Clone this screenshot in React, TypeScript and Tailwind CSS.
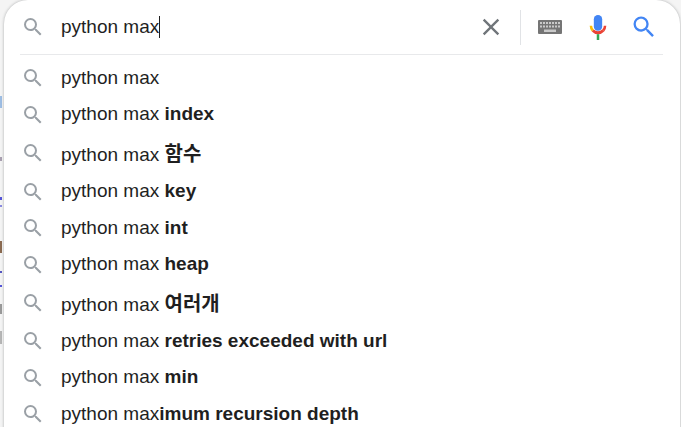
import React from "react";

function Glass({ className = "" }: { className?: string }) {
  return (
    <svg viewBox="0 0 24 24" className={className} fill="currentColor">
      <path d="M15.5 14h-.79l-.28-.27A6.471 6.471 0 0 0 16 9.5 6.5 6.5 0 1 0 9.5 16c1.61 0 3.09-.59 4.23-1.57l.27.28v.79l5 4.99L20.49 19l-4.99-5zm-6 0C7.01 14 5 11.99 5 9.5S7.01 5 9.5 5 14 7.01 14 9.5 11.99 14 9.5 14z" />
    </svg>
  );
}

const rows: { pre: string; bold: string; h: string; ko?: boolean }[] = [
  { pre: "python max", bold: "", h: "h-[36px]" },
  { pre: "python max ", bold: "index", h: "h-[37px]" },
  { pre: "python max ", bold: "함수", h: "h-[40px]", ko: true },
  { pre: "python max ", bold: "key", h: "h-[37px]" },
  { pre: "python max ", bold: "int", h: "h-[36px]" },
  { pre: "python max ", bold: "heap", h: "h-[37px]" },
  { pre: "python max ", bold: "여러개", h: "h-[40px]", ko: true },
  { pre: "python max ", bold: "retries exceeded with url", h: "h-[36px]" },
  { pre: "python max ", bold: "min", h: "h-[37px]" },
  { pre: "python max", bold: "imum recursion depth", h: "h-[36px]" },
];

const marks: { cls: string }[] = [
  { cls: "mt-[96px] h-[12px] bg-[#9dbde3]" },
  { cls: "mt-[49px] h-[4px] bg-[#a89fb0]" },
  { cls: "mt-[36px] h-[3px] bg-[#5555d8]" },
  { cls: "mt-[5px] h-[2px] bg-[#8a8ae0]" },
  { cls: "mt-[34px] h-[12px] bg-[#8a6a50]" },
  { cls: "mt-[18px] h-[2px] bg-[#5555c0]" },
  { cls: "mt-[12px] h-[2px] bg-[#5555d8]" },
  { cls: "mt-[17px] h-[10px] bg-[#999999]" },
  { cls: "mt-[17px] h-[13px] bg-[#b5b5b5]" },
];

export default function App() {
  return (
    <div className="flex h-[427px] w-[681px] overflow-hidden bg-[#f4f4f4] pr-[1px] font-['Liberation_Sans','Noto_Sans_CJK_KR',sans-serif] text-[19px] text-[#1f1f1f]">
      <div className="flex w-[3px] shrink-0 flex-col">
        {marks.map((m, i) => (
          <div key={i} className={`w-[2px] ${m.cls}`} />
        ))}
      </div>
      <div className="ml-px h-[460px] flex-1 rounded-t-[24px] bg-white shadow-[0_0_3px_rgba(60,64,67,0.4)]">
        <div className="flex h-[54px] items-center pl-[17px] pr-[22px]">
          <Glass className="h-[24px] w-[24px] text-[#9aa0a6]" />
          <div className="ml-[16px] flex flex-1 items-center">
            <span>python max</span>
            <span className="h-[22px] w-px bg-[#1f1f1f]" />
          </div>
          <svg viewBox="0 0 24 24" className="h-[28px] w-[28px] text-[#70757a]" fill="currentColor">
            <path d="M19 6.41 17.59 5 12 10.59 6.41 5 5 6.41 10.59 12 5 17.59 6.41 19 12 13.41 17.59 19 19 17.59 13.41 12z" />
          </svg>
          <div className="ml-[15px] h-[35px] w-px bg-[#e1e3e6]" />
          <svg viewBox="0 0 24 16" className="ml-[17px] h-[16px] w-[24px]">
            <rect x="0" y="1" width="24" height="14" rx="1" fill="#757575" />
            <g fill="#c9c9c9">
              <rect x="2" y="3" width="2" height="2" /><rect x="5" y="3" width="2" height="2" /><rect x="8" y="3" width="2" height="2" /><rect x="11" y="3" width="2" height="2" /><rect x="14" y="3" width="2" height="2" /><rect x="17" y="3" width="2" height="2" /><rect x="20" y="3" width="2" height="2" />
              <rect x="2" y="6.5" width="2" height="2" /><rect x="5" y="6.5" width="2" height="2" /><rect x="8" y="6.5" width="2" height="2" /><rect x="11" y="6.5" width="2" height="2" /><rect x="14" y="6.5" width="2" height="2" /><rect x="17" y="6.5" width="2" height="2" /><rect x="20" y="6.5" width="2" height="2" />
              <rect x="6" y="10.5" width="12" height="2.5" />
            </g>
          </svg>
          <svg viewBox="0 0 24 32" className="ml-[26px] h-[27px] w-[20px]">
            <rect x="7" y="1" width="10" height="19" rx="5" fill="#4285f4" />
            <path d="M2 14a10 10 0 0 0 2.6 6.7l2.4-2.2A7 7 0 0 1 5 14z" fill="#fbbc04" />
            <path d="M4.6 20.7A10 10 0 0 0 19.4 20.7L17 18.5a7 7 0 0 1-10 0z" fill="#ea4335" />
            <path d="M22 14a10 10 0 0 1-2.6 6.7L17 18.5a7 7 0 0 0 2-4.5z" fill="#ea4335" />
            <rect x="10.5" y="24" width="3" height="7" fill="#34a853" />
          </svg>
          <Glass className="ml-[22px] h-[28px] w-[28px] text-[#4285f4]" />
        </div>
        <div className="ml-[16px] mr-[17px] border-t border-[#e8e9eb]" />
        <div className="pt-[5px]">
          {rows.map((r, i) => (
            <div key={i} className={`flex items-center pl-[17px] ${r.h}`}>
              <Glass className="h-[24px] w-[24px] shrink-0 text-[#9aa0a6]" />
              <span className={r.ko ? "ml-[16px] translate-y-[1px] whitespace-pre" : "ml-[16px] whitespace-pre"}>
                {r.pre}
                {r.bold && <b className={r.ko ? "text-[20px] font-bold" : "font-bold"}>{r.bold}</b>}
              </span>
            </div>
          ))}
        </div>
      </div>
    </div>
  );
}
